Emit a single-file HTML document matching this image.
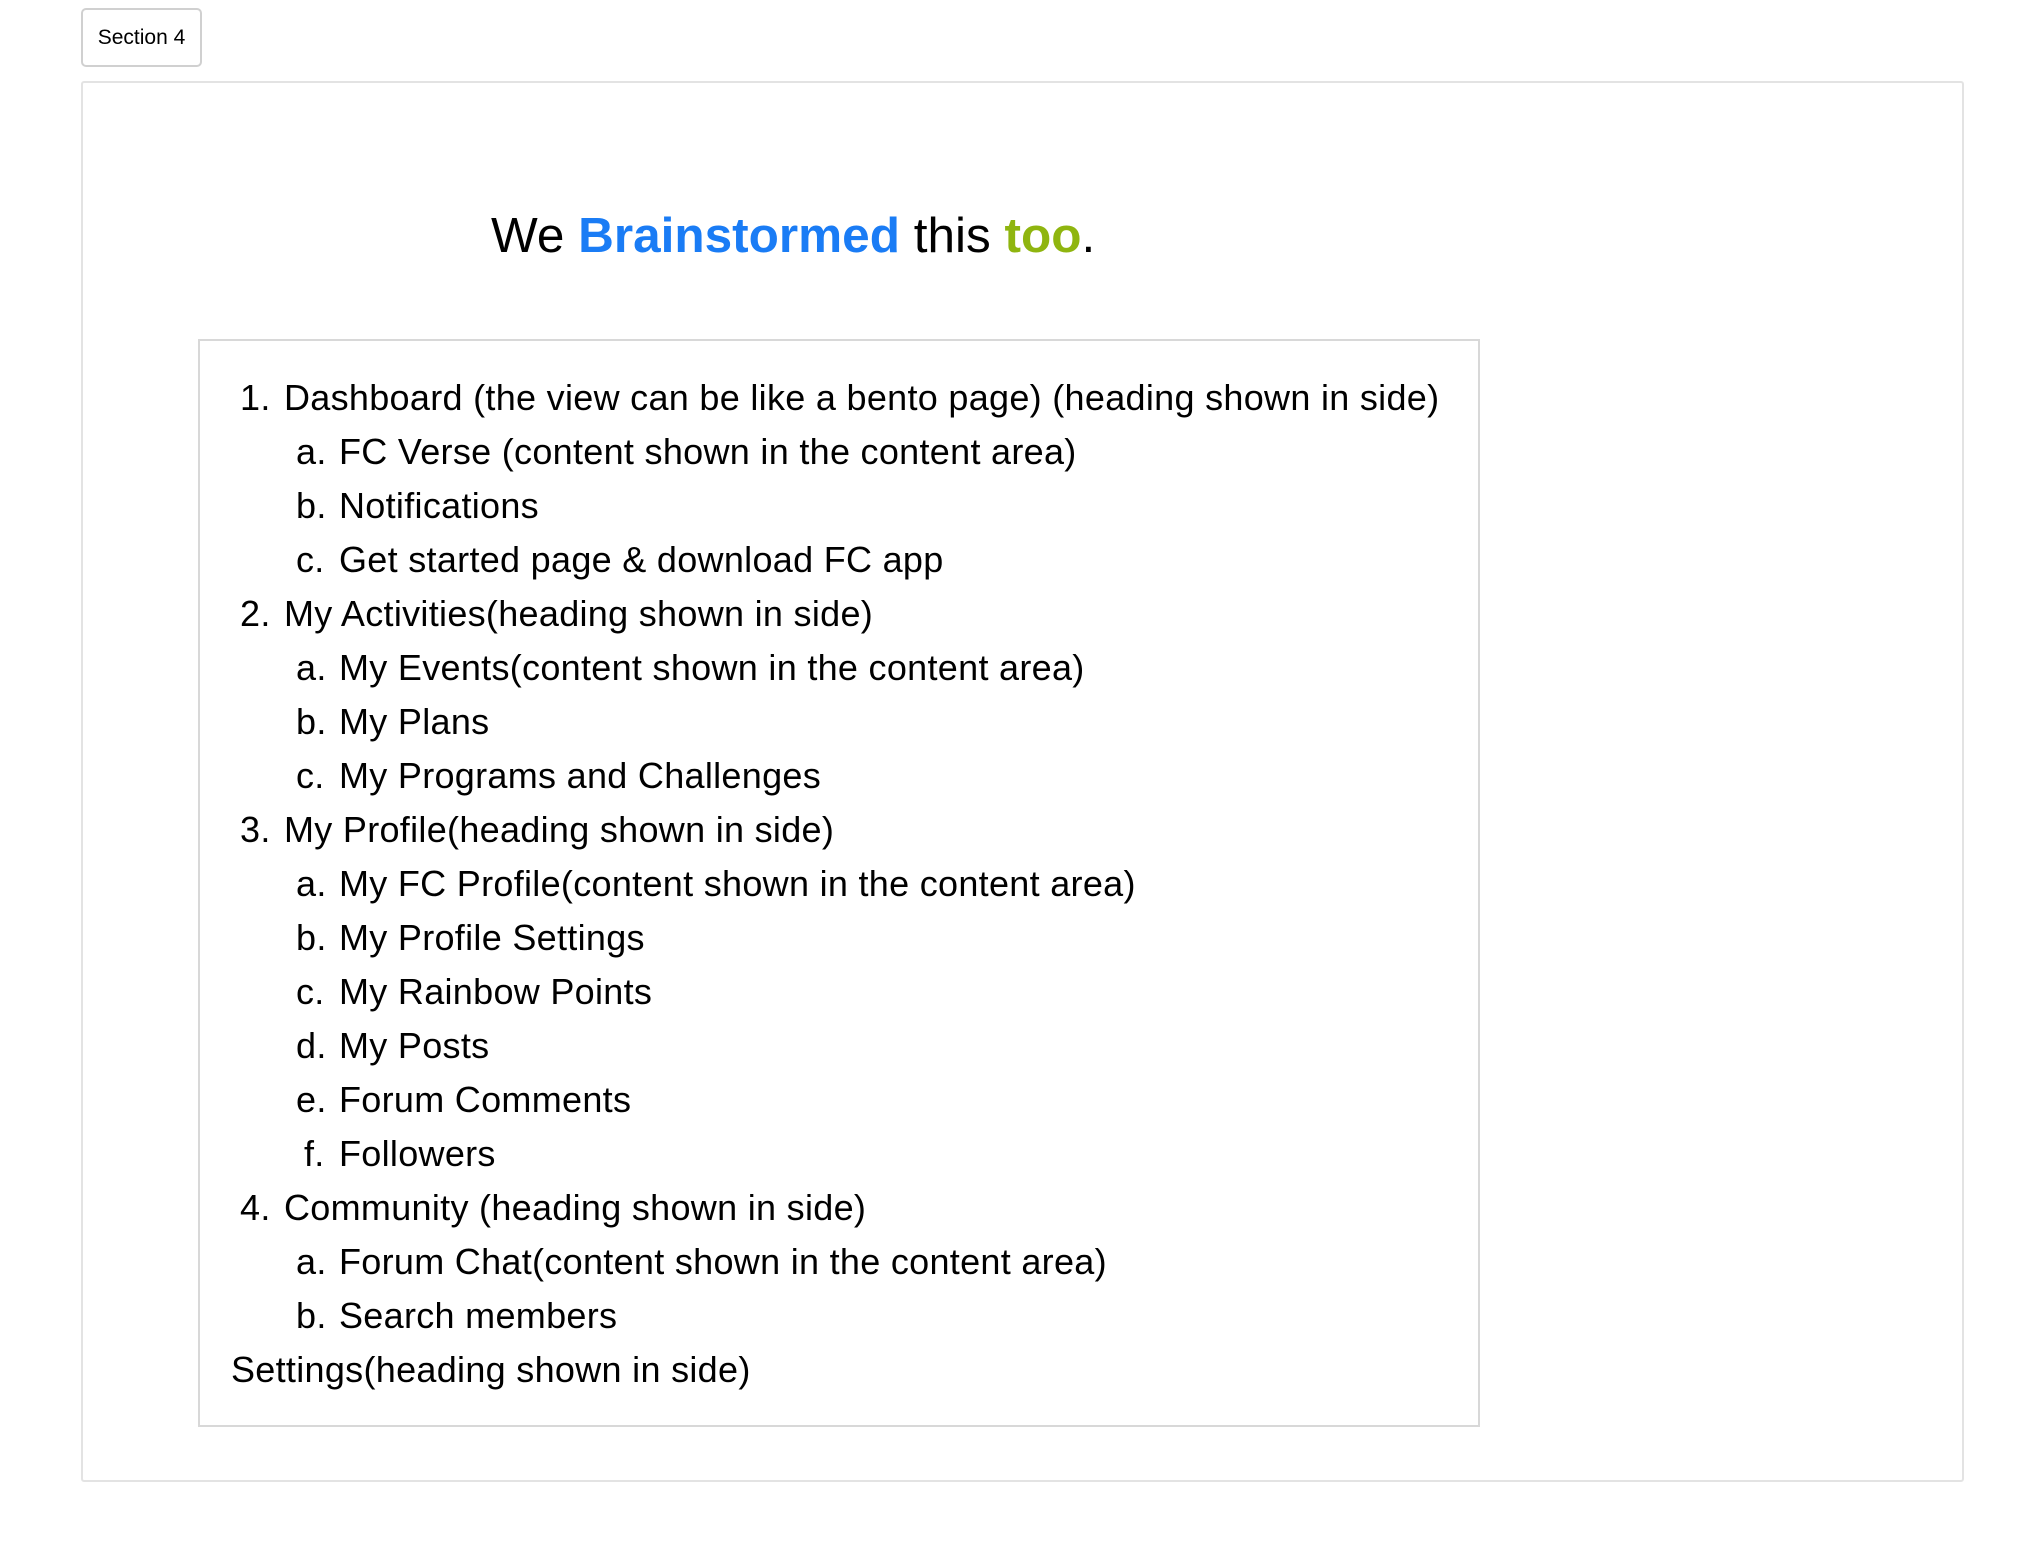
<!DOCTYPE html>
<html><head><meta charset="utf-8"><style>
*{margin:0;padding:0;box-sizing:border-box}
body{width:2044px;height:1562px;background:#fff;font-family:"Liberation Sans",sans-serif;color:#000;position:relative;overflow:hidden}
.btn{position:absolute;left:81px;top:8px;width:121px;height:59px;border:2px solid #d0d0d0;border-radius:5px;font-size:21px;line-height:55px;text-align:center}
.card{position:absolute;left:81px;top:81px;width:1883px;height:1401px;border:2px solid #e3e3e3;border-radius:3px}
h1{position:absolute;left:491px;top:236px;font-size:49.5px;font-weight:normal;line-height:0;white-space:nowrap}
.b{color:#1a7cf5;font-weight:bold}.g{color:#8fb50f;font-weight:bold}
.box{position:absolute;left:198px;top:339px;width:1282px;height:1088px;border:2px solid #d8d8d8}
.l{position:absolute;font-size:36px;letter-spacing:0.3px;line-height:54px;white-space:nowrap}
</style></head><body>
<div class="btn">Section 4</div>
<div class="card"></div>
<h1>We <span class="b">Brainstormed</span> this <span class="g">too</span>.</h1>
<div class="box"></div>
<div class="l" style="left:240px;top:371px">1.</div><div class="l" style="left:284px;top:371px">Dashboard (the view can be like a bento page) (heading shown in side)</div>
<div class="l" style="left:296px;top:425px">a.</div><div class="l" style="left:339px;top:425px">FC Verse (content shown in the content area)</div>
<div class="l" style="left:296px;top:479px">b.</div><div class="l" style="left:339px;top:479px">Notifications</div>
<div class="l" style="left:296px;top:533px">c.</div><div class="l" style="left:339px;top:533px">Get started page &amp; download FC app</div>
<div class="l" style="left:240px;top:587px">2.</div><div class="l" style="left:284px;top:587px">My Activities(heading shown in side)</div>
<div class="l" style="left:296px;top:641px">a.</div><div class="l" style="left:339px;top:641px">My Events(content shown in the content area)</div>
<div class="l" style="left:296px;top:695px">b.</div><div class="l" style="left:339px;top:695px">My Plans</div>
<div class="l" style="left:296px;top:749px">c.</div><div class="l" style="left:339px;top:749px">My Programs and Challenges</div>
<div class="l" style="left:240px;top:803px">3.</div><div class="l" style="left:284px;top:803px">My Profile(heading shown in side)</div>
<div class="l" style="left:296px;top:857px">a.</div><div class="l" style="left:339px;top:857px">My FC Profile(content shown in the content area)</div>
<div class="l" style="left:296px;top:911px">b.</div><div class="l" style="left:339px;top:911px">My Profile Settings</div>
<div class="l" style="left:296px;top:965px">c.</div><div class="l" style="left:339px;top:965px">My Rainbow Points</div>
<div class="l" style="left:296px;top:1019px">d.</div><div class="l" style="left:339px;top:1019px">My Posts</div>
<div class="l" style="left:296px;top:1073px">e.</div><div class="l" style="left:339px;top:1073px">Forum Comments</div>
<div class="l" style="left:304px;top:1127px">f.</div><div class="l" style="left:339px;top:1127px">Followers</div>
<div class="l" style="left:240px;top:1181px">4.</div><div class="l" style="left:284px;top:1181px">Community (heading shown in side)</div>
<div class="l" style="left:296px;top:1235px">a.</div><div class="l" style="left:339px;top:1235px">Forum Chat(content shown in the content area)</div>
<div class="l" style="left:296px;top:1289px">b.</div><div class="l" style="left:339px;top:1289px">Search members</div>
<div class="l" style="left:231px;top:1343px">Settings(heading shown in side)</div>
</body></html>
